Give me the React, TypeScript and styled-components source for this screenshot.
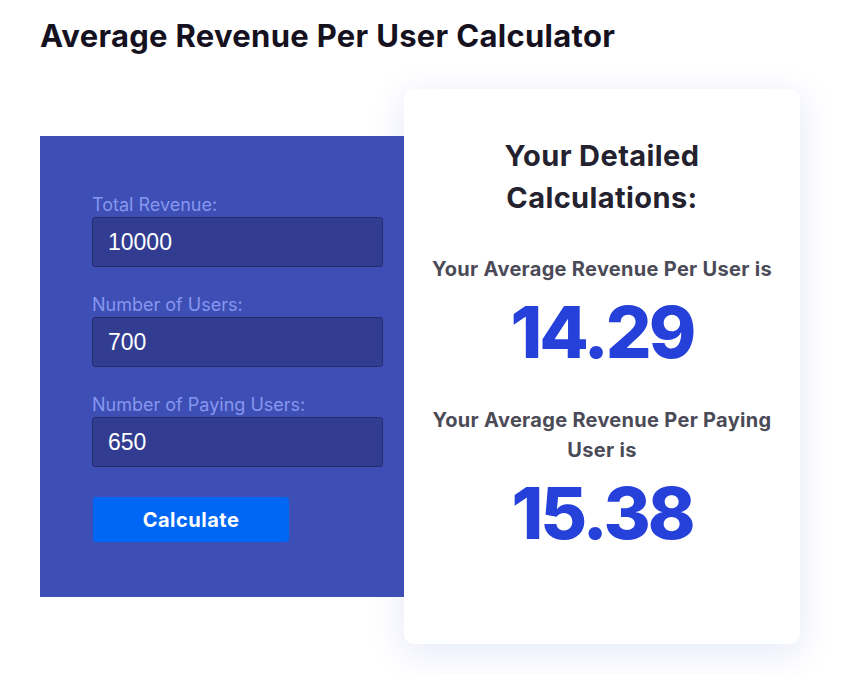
import React from 'react';
import styled, { createGlobalStyle } from 'styled-components';

const GlobalStyle = createGlobalStyle`
  body {
    margin: 0;
    background: #ffffff;
    font-family: Inter, "Noto Sans", sans-serif;
  }
`;

const Page = styled.div`
  padding: 16px 40px 30px 40px;
`;

const Title = styled.h1`
  margin: 0 0 33px 0;
  font-size: 31px;
  line-height: 40px;
  font-weight: 700;
  color: #15111f;
  letter-spacing: 0.3px;
`;

const Row = styled.div`
  display: flex;
  align-items: center;
`;

/* sits above the card so the card's shadow doesn't tint it */
const FormPanel = styled.div`
  position: relative;
  z-index: 1;
  width: 364px;
  height: 461px;
  box-sizing: border-box;
  background: #3d4fb5;
  padding: 57px 21px 0 52px;
  display: flex;
  flex-direction: column;
`;

const Field = styled.div`
  display: flex;
  flex-direction: column;
  margin-bottom: 26px;
`;

const Label = styled.label`
  font-size: 18px;
  line-height: 24px;
  font-weight: 400;
  color: #8796ee;
`;

const Input = styled.input`
  box-sizing: border-box;
  width: 291px;
  height: 50px;
  background: #323c90;
  border: 1px solid #262d6e;
  border-radius: 3px;
  padding: 0 15px;
  font-family: "Liberation Sans", Arial, sans-serif;
  font-size: 23px;
  color: #ffffff;
  outline: none;
`;

const Button = styled.button`
  margin-top: 4px;
  margin-left: 1px;
  width: 196px;
  height: 45px;
  background: #0067f4;
  border: none;
  border-radius: 3px;
  color: #ffffff;
  font-family: Inter, sans-serif;
  font-size: 20px;
  font-weight: 700;
  letter-spacing: 0.5px;
  cursor: pointer;
`;

const ResultCard = styled.div`
  width: 396px;
  height: 555px;
  box-sizing: border-box;
  background: #ffffff;
  border-radius: 10px;
  box-shadow: 0 8px 36px rgba(70, 90, 210, 0.14);
  padding: 46px 20px 0;
  text-align: center;
`;

const CardHeading = styled.h2`
  margin: 0 auto 35px;
  max-width: 250px;
  font-size: 29px;
  line-height: 42px;
  font-weight: 700;
  color: #25222f;
  letter-spacing: 0.4px;
`;

const ResultLabel = styled.div`
  font-size: 20px;
  line-height: 30px;
  font-weight: 700;
  color: #4b4a57;
  letter-spacing: 0.3px;
`;

const ResultValue = styled.div`
  margin: 6px 0 31px;
  font-size: 72px;
  line-height: 84px;
  font-weight: 800;
  color: #2541d9;
  letter-spacing: -3px;
`;

const fields = [
  { label: 'Total Revenue:', value: '10000' },
  { label: 'Number of Users:', value: '700' },
  { label: 'Number of Paying Users:', value: '650' },
];

export default function App() {
  return (
    <>
      <GlobalStyle />
      <Page>
        <Title>Average Revenue Per User Calculator</Title>
        <Row>
          <FormPanel>
            {fields.map((f) => (
              <Field key={f.label}>
                <Label>{f.label}</Label>
                <Input defaultValue={f.value} />
              </Field>
            ))}
            <Button>Calculate</Button>
          </FormPanel>
          <ResultCard>
            <CardHeading>Your Detailed Calculations:</CardHeading>
            <ResultLabel>Your Average Revenue Per User is</ResultLabel>
            <ResultValue>14.29</ResultValue>
            <ResultLabel>Your Average Revenue Per Paying User is</ResultLabel>
            <ResultValue>15.38</ResultValue>
          </ResultCard>
        </Row>
      </Page>
    </>
  );
}
